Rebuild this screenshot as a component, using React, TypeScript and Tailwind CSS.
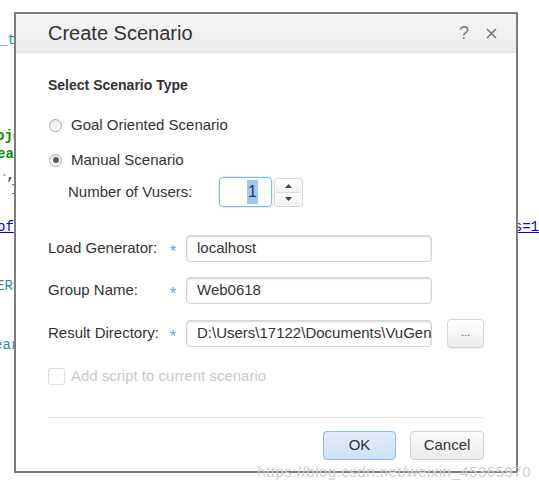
import React from 'react';

const codeFont = { fontFamily: '"Liberation Mono", "DejaVu Sans Mono", monospace' };
const uiFont = { fontFamily: '"Liberation Sans", Arial, sans-serif' };

function Radio({ checked }: { checked?: boolean }) {
  return (
    <span className="flex h-[13px] w-[13px] items-center justify-center rounded-full border border-[#a9a9a9] bg-gradient-to-b from-[#ececec] to-white">
      {checked && <span className="h-[6px] w-[6px] rounded-full bg-[#5a5a5a]" />}
    </span>
  );
}

function Field({ label, value, withButton }: { label: string; value: string; withButton?: boolean }) {
  return (
    <div className="flex items-center">
      <span className="w-[118px] text-[15px] text-[#333]">{label}</span>
      <span className="mt-[6px] w-[14px] text-center text-[17px] leading-none text-[#6aa6ee]">*</span>
      <div className="ml-[6px] flex h-[27px] w-[246px] items-center overflow-hidden whitespace-nowrap rounded-[4px] border border-[#d4d4d4] px-[10px] text-[15px] text-[#333] shadow-[inset_0_1px_2px_rgba(0,0,0,0.18)]">
        {value}
      </div>
      {withButton && (
        <button className="ml-[15px] flex h-[29px] w-[37px] items-center justify-center rounded-[4px] border border-[#d6d6d6] bg-gradient-to-b from-white to-[#ececec] pb-[2px] text-[11px] text-[#555] shadow-[0_1px_1px_rgba(0,0,0,0.08)]">
          ...
        </button>
      )}
    </div>
  );
}

export default function App() {
  return (
    <div className="relative h-[491px] w-[539px] overflow-hidden bg-white" style={uiFont}>
      {/* code editor behind the dialog */}
      <div className="text-[14px] leading-[18px]" style={codeFont}>
        <div className="mt-[31px] -ml-[1px] text-[#2b8d9c]">_tr</div>
        <div className="mt-[78px] -ml-[4px] font-bold text-[#0a8a0a]">oje</div>
        <div className="-ml-[3px] font-bold text-[#0a8a0a]">ear</div>
        <div className="flex h-[18px] text-[#222]">
          <span className="text-[#3bc6d8]">.</span>
          <span className="ml-[-2px] mt-[3px]">,</span>
        </div>
        <div className="pl-[11px] text-[#8a2be2]">I</div>
        <div className="mt-[19px] flex justify-between">
          <span className="-ml-[3px] text-[#0000ee] underline">oft</span>
          <span className="text-[#0000ee] underline">s=1</span>
        </div>
        <div className="mt-[41px] -ml-[4px] text-[#2b8d9c]">ERS</div>
        <div className="mt-[41px] -ml-[6px] text-[#2b8d9c]">ear</div>
      </div>

      {/* dialog */}
      <div className="absolute left-[14px] top-[12px] flex h-[461px] w-[504px] flex-col border-2 border-[#7d7d7d] bg-white">
        <div className="flex h-[39px] items-center justify-between border-b border-[#dedede] bg-gradient-to-b from-[#f5f5f5] to-[#ececec] pl-[32px] pr-[19px]">
          <span className="text-[20px] text-[#333]">Create Scenario</span>
          <div className="flex items-center gap-[17px] text-[#777]">
            <span className="text-[18px]">?</span>
            <svg width="11" height="11" viewBox="0 0 11 11">
              <path d="M1 1 L10 10 M10 1 L1 10" stroke="#777" strokeWidth="1.6" />
            </svg>
          </div>
        </div>

        <div className="flex flex-1 flex-col px-[32px]">
          <div className="mt-[24px] text-[14px] font-bold leading-[16px] text-[#333]">Select Scenario Type</div>

          <label className="mt-[22px] flex h-[20px] items-center gap-[9px] pl-[1px] text-[15px] text-[#333]">
            <Radio />
            Goal Oriented Scenario
          </label>
          <label className="mt-[15px] flex h-[20px] items-center gap-[9px] pl-[1px] text-[15px] text-[#333]">
            <Radio checked />
            Manual Scenario
          </label>

          <div className="mt-[7px] flex h-[30px] items-center pl-[20px]">
            <span className="w-[151px] text-[15px] text-[#333]">Number of Vusers:</span>
            <div className="flex h-[30px] w-[53px] items-center justify-end rounded-[4px] border border-[#7fb6ee] pr-[13px] text-[16px] shadow-[0_0_2px_rgba(80,150,230,0.6)]">
              <span className="bg-[#9ec8f4] px-[1px] text-[#1a3a6a]">1</span>
            </div>
            <div className="ml-[2px] flex h-[29px] w-[29px] flex-col rounded-[4px] border border-[#d4d4d4] bg-white p-[1px]">
              <div className="flex flex-1 items-center justify-center rounded-t-[3px] border-b border-[#dcdcdc] bg-gradient-to-b from-white to-[#f0f0f0]">
                <svg width="7" height="4" viewBox="0 0 7 4"><path d="M0 4 L3.5 0 L7 4 Z" fill="#444" /></svg>
              </div>
              <div className="flex flex-1 items-center justify-center rounded-b-[3px] bg-gradient-to-b from-white to-[#f0f0f0]">
                <svg width="7" height="4" viewBox="0 0 7 4"><path d="M0 0 L3.5 4 L7 0 Z" fill="#444" /></svg>
              </div>
            </div>
          </div>

          <div className="mt-[28px] flex flex-col gap-[15px]">
            <Field label="Load Generator:" value="localhost" />
            <Field label="Group Name:" value="Web0618" />
            <Field label="Result Directory:" value="D:\Users\17122\Documents\VuGen\Scripts" withButton />
          </div>

          <label className="mt-[19px] flex h-[18px] items-center gap-[6px] text-[15px] text-[#c8c8c8]">
            <span className="h-[17px] w-[17px] rounded-[3px] border border-[#dedede] bg-white" />
            Add script to current scenario
          </label>

          <div className="mt-[32px] border-t border-[#e2e2e2]" />

          <div className="mt-[13px] flex justify-end gap-[14px]">
            <button className="h-[29px] w-[73px] rounded-[4px] border border-[#8db8e8] bg-gradient-to-b from-[#e3eefb] to-[#cfe1f7] text-[15px] text-[#333]">
              OK
            </button>
            <button className="h-[29px] w-[74px] rounded-[4px] border border-[#d2d2d2] bg-gradient-to-b from-[#fbfbfb] to-[#ececec] text-[15px] text-[#333]">
              Cancel
            </button>
          </div>
        </div>
      </div>

      {/* watermark */}
      <div className="absolute right-[8px] top-[461px] text-[15px] tracking-[0.5px] text-[#d0d0d0]">
        https://blog.csdn.net/weixin_45365970
      </div>
    </div>
  );
}
